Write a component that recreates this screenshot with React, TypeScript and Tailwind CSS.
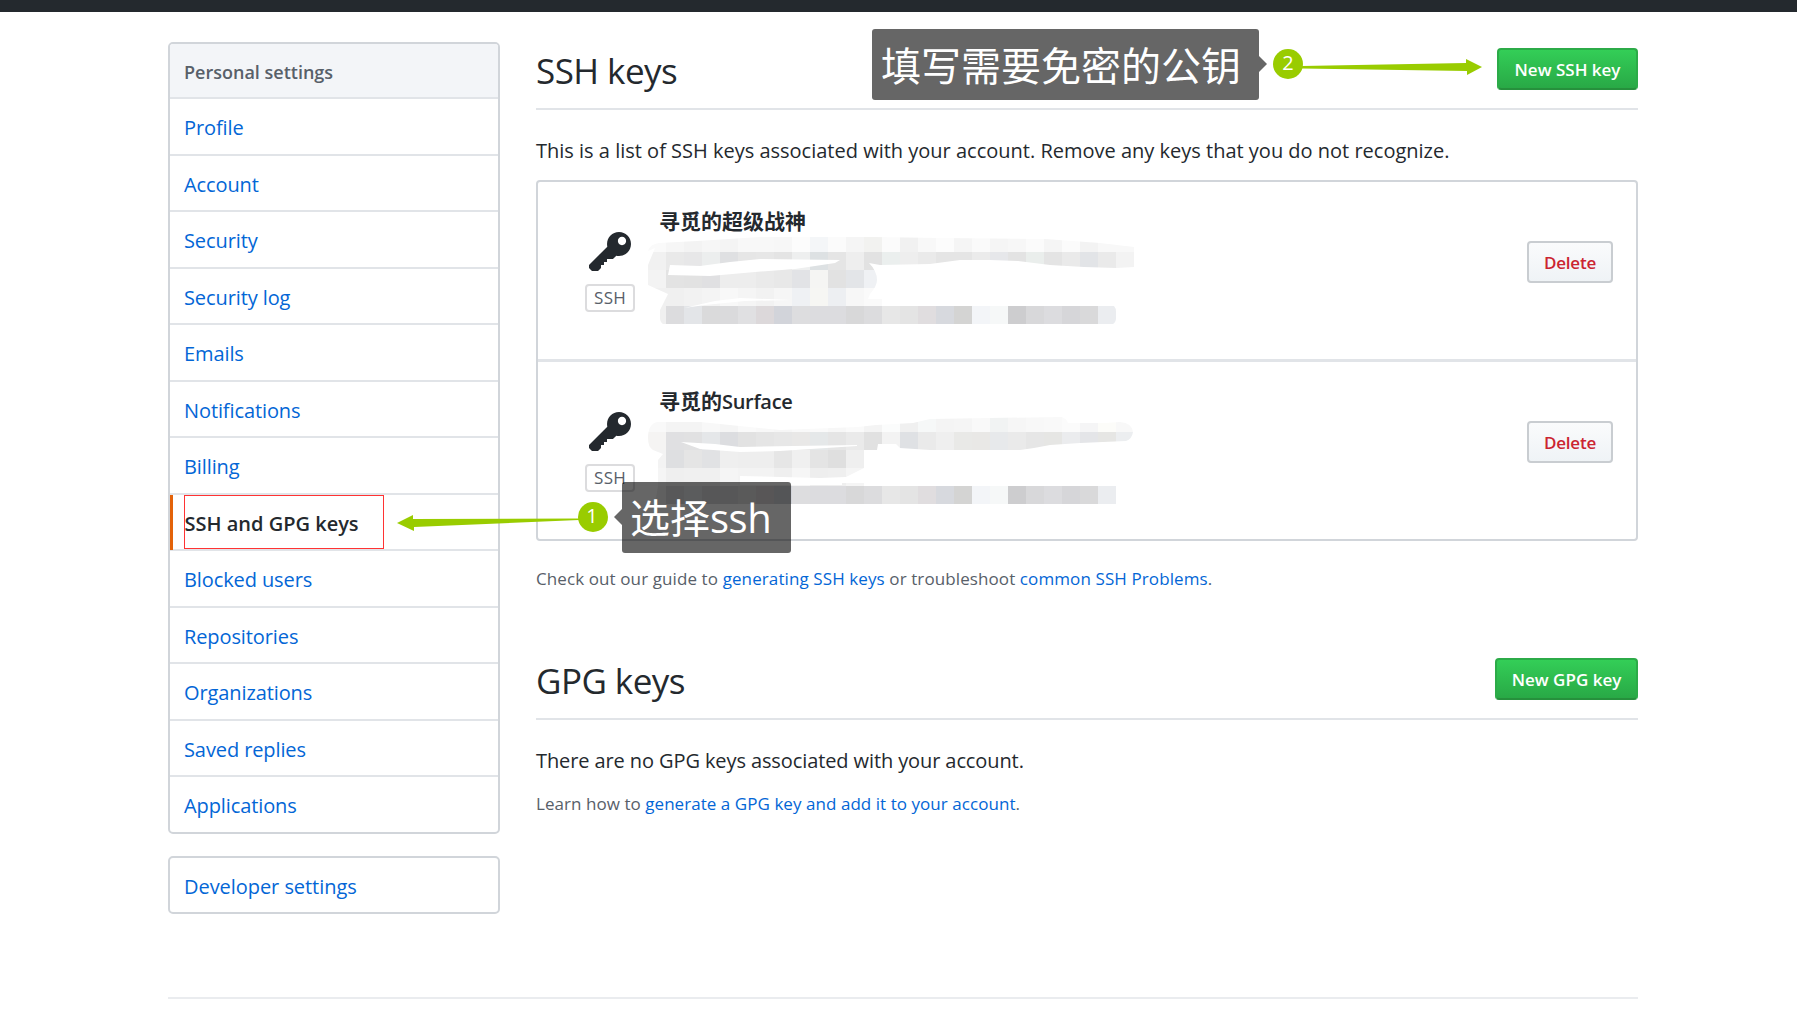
import React from 'react';

const navItems = [
  'Profile',
  'Account',
  'Security',
  'Security log',
  'Emails',
  'Notifications',
  'Billing',
  'SSH and GPG keys',
  'Blocked users',
  'Repositories',
  'Organizations',
  'Saved replies',
  'Applications',
];

// One cell of the mosaic is 18px wide, rows are 18px tall
type MosaicRow = { x: number; y: number; cells: string[] };

const lastRow = [
  '#f0f0f0', '#dcdcde', '#e3e5e8', '#dadadb', '#dadadc', '#e0e0e2', '#dcd8da', '#d2d4da', '#dddddf', '#dcdcdf', '#dcdcdf',
  '#d8d8d9', '#dcdcde', '#e7e7e7', '#e4e4e4', '#e0dddf', '#d7d9de', '#d4d4d3', '#f3f5f8', '#f6f8f8', '#cdcdcf', '#d8d8da',
  '#dcdcdf', '#d6d6d9', '#d9d9da', '#ebedf0',
];

const firstMosaic: MosaicRow[] = [
  {
    x: 3, y: 0,
    cells: [
      '#fafafa', '#f6f6f6', '#f3f3f3', '#f6f6f6', '#f4f4f4', '#f8f8f8', '#f8f8f8', '#f7f7f7', '#fcfcfc', '#f4f6f8', '#fbfbfb',
      '#f5f5f5', '#f2f2f0', '#fbfbfb', '#f1f1f1', '#f8f8f8', '#fcfcfc', '#f5f5f5', '#fafafa', '#f5f5f5', '#f7f7f7', '#fbfbfb',
      '#f5f5f5', '#fbfbfb', '#f3f3f3', '#f8f8f8', '#f8f8f8',
    ],
  },
  {
    x: 3, y: 18,
    cells: [
      '#f1f1f1', '#e9e9e9', '#e7e7e8', '#eceeee', '#dfe0e2', '#e6e6e6', '#e7e7e7', '#e4e4e4', '#eeefef', '#dde1e3', '#e5e5e5',
      '#eeeeee', '#e2e2e2', '#ebefee', '#eeeeee', '#eaeaea', '#e5e5e5', '#e5e5e5', '#ebebeb', '#e6e7ea', '#e3e3e3', '#eaeeec',
      '#e4e4e4', '#eaeaea', '#e2e4e7', '#eaeaea', '#f3f3f3',
    ],
  },
  {
    x: 3, y: 36,
    cells: ['#f3f3f3', '#e3e3e3', '#e2e2e2', '#e0e0e2', '#ededed', '#ededed', '#eaeaea', '#e8e8e8', '#e2e3e6', '#f5f5f3', '#e2e2e2', '#e3e5e8', '#eff1f4'],
  },
  {
    x: 3, y: 54,
    cells: ['#f0f0f0', '#f0f0f0', '#f2f2f2', '#f4f4f4', '#f8f8f8', '#f5f5f5', '#f2f2f2', '#f6f6f6', '#eff1f4', '#f6f6f3', '#edeff2', '#f7f7f7', '#fafafa'],
  },
  { x: 3, y: 72, cells: lastRow },
];

const secondMosaic: MosaicRow[] = [
  {
    x: 3, y: 0,
    cells: [
      '#f9f9f9', '#f4f4f4', '#f4f4f4', '#f8f8f8', '#f5f5f5', '#fafafa', '#f8f8f8', '#f6f6f6', '#f9f9f9', '#fafafa', '#f7f7f7',
      '#fafafa', '#f4f4f4', '#fbfcfc', '#f0f0f0', '#f6f8f8', '#f4f4f4', '#f5f5f5', '#f9f9f9', '#f1f3f3', '#f6f6f6', '#f8f8f8',
      '#f9f9f9', '#fbfbfb', '#f5f5f6', '#fcfcf9', '#f8f8f8',
    ],
  },
  {
    x: 3, y: 18,
    cells: [
      '#f5f4f3', '#e0e0e2', '#e1e1e2', '#e5e7e9', '#dcdde0', '#e2e2e2', '#e5e5e5', '#e7e7e7', '#e9e8e7', '#e5e8e9', '#e5e5e5',
      '#eaeaea', '#e1e1e1', '#f3f3f3', '#dfe1e4', '#eaeaea', '#efefef', '#e9e9e7', '#e9e8e6', '#e7e9eb', '#eaeaea', '#e6e6e6',
      '#e6e6e4', '#ebecee', '#e4e5e8', '#e6e6e4', '#eceef0',
    ],
  },
  {
    x: 3, y: 36,
    cells: ['#f3f3f3', '#dedfe1', '#e5e5e5', '#e1e2e4', '#efefef', '#eeeeee', '#eeeeee', '#e6e6e6', '#f0f0f0', '#e4e4e4', '#dfdfdf', '#efefef', '#f1f1f1'],
  },
  {
    x: 3, y: 54,
    cells: ['#f5f5f5', '#efefef', '#f0f0f0', '#f0f0f0', '#f5f5f5', '#f3f3f3', '#f3f3f3', '#efefef', '#f6f6f6', '#eeeeee', '#efefef', '#f5f5f5', '#f9f9f9'],
  },
  { x: 3, y: 72, cells: lastRow },
];

const firstOutline =
  'M3 17 Q5 10 14 9 L52 7 L115 3 L155 3 L228 3 L295 4 L400 5 L455 9 L489 13 V33 L471 34 L439 33 L405 31 L373 27 L345 26 L315 26 L285 30 L235 31 L224 29 Q232 37 232 46 Q232 52 225 60 L223 65 H237 V72 H469 Q471 74 471 78 V84 Q471 88 468 90 H18 Q15 88 15 84 V76 L23 60 L3 51 V31 L10 14 Z ' +
  'M25 31 L55 32 L85 28 L115 25 L195 26 L190 29 L150 35 L110 38 L65 42 L23 41 Z ' +
  'M39 74 L70 67 L95 64 L147 66 L100 67 L60 71 Z';

const secondOutline =
  'M3 24 Q3 10 12 8 L55 8 L75 10 L135 16 L213 13 L231 11 L268 9 L285 5 L345 4 L417 3 Q422 5 423 9 L460 9 L475 8 Q487 9 488 18 Q487 25 481 27 L435 29 L405 31 L389 34 L375 36 L285 36 L255 34 L251 30 L233 30 L232 36 L219 36 V54 L201 63 L175 64 L95 62 V71 L197 71 V69 H219 V72 H471 V90 H10 L13 72 V46 L18 40 L8 36 Q3 33 3 24 Z ' +
  'M36 28 L70 30 L95 33 L212 31 L212 32 L135 37 L95 38 L55 35 Z';

const Scribble = ({ id, rows, outline }: { id: string; rows: MosaicRow[]; outline: string }) => (
  <svg className="-ml-[14px] -mt-px block" width="495" height="92" viewBox="0 0 495 92" shapeRendering="crispEdges">
    <clipPath id={id}>
      <path d={outline} clipRule="evenodd" />
    </clipPath>
    <g clipPath={`url(#${id})`}>
      {rows.map((row) =>
        row.cells.map((fill, i) => (
          <rect key={`${row.y}-${i}`} x={row.x + i * 18} y={row.y} width="18" height="18" fill={fill} />
        ))
      )}
    </g>
  </svg>
);

const KeyIcon = () => (
  <svg width="42" height="48" viewBox="0 0 14 16" fill="#24292e">
    <path
      fillRule="evenodd"
      d="M12.83 2.17C12.08 1.42 11.14 1.03 10 1c-1.13.03-2.08.42-2.83 1.17S6.04 3.86 6.01 5c0 .3.03.59.09.89L0 12v1l1 1h2l1-1v-1h1v-1h1v-1h2l1.09-1.11c.3.08.59.11.91.11 1.14-.03 2.08-.42 2.83-1.17S13.97 6.14 14 5c-.03-1.14-.42-2.08-1.17-2.83zM11 5.38c-.77 0-1.38-.61-1.38-1.38 0-.77.61-1.38 1.38-1.38.77 0 1.38.61 1.38 1.38 0 .77-.61 1.38-1.38 1.38z"
    />
  </svg>
);

const GreenButton = ({ children, className }: { children: React.ReactNode; className: string }) => (
  <button
    className={`mt-1.5 h-[42px] rounded-[4px] border-2 border-[#2cab48] border-b-[#26903c] bg-linear-to-b from-[#34d058] to-[#28a745] bg-origin-border text-[17px] font-semibold leading-[40px] text-white ${className}`}
  >
    {children}
  </button>
);

const SectionHead = ({ title, children }: { title: string; children: React.ReactNode }) => (
  <div className="flex h-[68px] items-start justify-between border-b-2 border-[#e1e4e8]">
    <h2 className="text-[35px] leading-[58px] tracking-[-0.55px]">{title}</h2>
    {children}
  </div>
);

const KeyRow = ({ title, children }: { title: React.ReactNode; children: React.ReactNode }) => (
  <li className="box-content flex h-[177px] items-start pl-[47px] pr-[23px]">
    <div className="flex w-[50px] flex-col items-center pt-[47px]">
      <KeyIcon />
      <span className="mt-[7px] h-7 w-[50px] rounded-[4px] border-2 border-[#dcdcde] text-center text-[17px] leading-[24px] tracking-[0.2px] text-[#586069]">
        SSH
      </span>
    </div>
    <div className="ml-6 flex-1 pt-[25px]">
      <strong className="block h-7 text-[21px] font-bold leading-7">{title}</strong>
      {children}
    </div>
    <button className="mt-[59px] h-[42px] w-[86px] rounded-[4px] border-2 border-[#c9cdd1] bg-linear-to-b from-[#fafbfc] to-[#eff3f6] text-[17px] font-semibold leading-[40px] tracking-[-0.2px] text-[#cb2431]">
      Delete
    </button>
  </li>
);

const Link = ({ children }: { children: React.ReactNode }) => (
  <a href="#" className="text-[#0366d6]">
    {children}
  </a>
);

const App = () => {
  return (
    <div className="relative h-[1016px] w-[1797px] overflow-hidden bg-white font-['Open_Sans','Noto_Sans_CJK_SC',sans-serif] text-[20px] text-[#24292e]">
      <div className="h-3 bg-[#24292e]" />

      <div className="ml-[168px] w-[1470px] pt-[30px]">
        <div className="flex h-[955px] items-start gap-9">
          <aside className="w-[332px]">
            <nav className="flex h-[792px] flex-col overflow-hidden rounded-[5px] border-2 border-[#d1d5da]">
              <h3 className="h-[55px] border-b-2 border-[#e1e4e8] bg-[#f3f5f8] pl-[14px] text-[18px] font-semibold leading-[56px] text-[#586069]">
                Personal settings
              </h3>
              {navItems.map((item) =>
                item === 'SSH and GPG keys' ? (
                  <a
                    key={item}
                    href="#"
                    className="relative h-[56.54px] border-b-2 border-[#e1e4e8] pl-[14.5px] font-semibold leading-[58px] before:absolute before:left-0 before:top-0 before:h-[55px] before:w-[3px] before:bg-[#e36209]"
                  >
                    {item}
                  </a>
                ) : (
                  <a
                    key={item}
                    href="#"
                    className="h-[56.54px] border-b-2 border-[#e1e4e8] pl-[14px] leading-[58px] tracking-[-0.1px] text-[#0366d6] last:border-b-0"
                  >
                    {item}
                  </a>
                )
              )}
            </nav>
            <nav className="mt-[22px] h-[58px] rounded-[5px] border-2 border-[#d1d5da] pl-[14px] leading-[58px] tracking-[-0.05px]">
              <Link>Developer settings</Link>
            </nav>
          </aside>

          <main className="w-[1102px]">
            <SectionHead title="SSH keys">
              <GreenButton className="w-[141px]">New SSH key</GreenButton>
            </SectionHead>
            <p className="mt-[25px] leading-8">
              This is a list of SSH keys associated with your account. Remove any keys that you do not recognize.
            </p>
            <ul className="mt-[13px] divide-y-3 divide-[#e1e4e8] rounded-[4px] border-2 border-[#d1d5da]">
              <KeyRow title="寻觅的超级战神">
                <Scribble id="mosaic-first" rows={firstMosaic} outline={firstOutline} />
              </KeyRow>
              <KeyRow
                title={
                  <>
                    寻觅的<span className="text-[20px] font-semibold tracking-[-0.3px]">Surface</span>
                  </>
                }
              >
                <Scribble id="mosaic-second" rows={secondMosaic} outline={secondOutline} />
              </KeyRow>
            </ul>
            <p className="mt-6 text-[17px] leading-[27px] tracking-[0.1px] text-[#586069]">
              Check out our guide to <Link>generating SSH keys</Link> or troubleshoot <Link>common SSH Problems</Link>.
            </p>

            <div className="mt-[60px]">
              <SectionHead title="GPG keys">
                <GreenButton className="w-[143px]">New GPG key</GreenButton>
              </SectionHead>
            </div>
            <p className="mt-[25px] leading-8 tracking-[-0.1px]">There are no GPG keys associated with your account.</p>
            <p className="mt-[13px] text-[17px] leading-[27px] tracking-[0.05px] text-[#586069]">
              Learn how to <Link>generate a GPG key and add it to your account</Link>.
            </p>
          </main>
        </div>
        <div className="border-t-2 border-[#eaecef]" />
      </div>

      {/* step 1 */}
      <div className="absolute left-[184px] top-[495px] h-[54px] w-[200px] border border-[#ff3333]" />
      <svg className="absolute left-[396px] top-[500px]" width="226" height="36" viewBox="0 0 226 36">
        <path d="M1 23 L17 15 V19 L183 18.5 V20 L18 27 V31 Z" fill="#99cc00" />
        <circle cx="197" cy="17" r="15" fill="#99cc00" />
        <path d="M218 17 L226 9 V25 Z" fill="#000" fillOpacity="0.6" />
      </svg>
      <span className="absolute left-[577px] top-[501px] w-[30px] text-center text-[20px] leading-[30px] text-white">1</span>
      <div className="absolute left-[622px] top-[482px] h-[71px] w-[169px] rounded-[3px] bg-black/60 pl-2 text-[40px] leading-[71px] text-white">
        选择<span className="tracking-[-0.5px]">ssh</span>
      </div>

      {/* step 2 */}
      <div className="absolute left-[872px] top-[29px] h-[71px] w-[387px] rounded-[3px] bg-black/60 pl-[9px] text-[40px] leading-[73px] text-white">
        填写需要免密的公钥
      </div>
      <svg className="absolute left-[1259px] top-[46px]" width="226" height="36" viewBox="0 0 226 36">
        <path d="M8 18 L0 10 V26 Z" fill="#000" fillOpacity="0.6" />
        <circle cx="29" cy="18" r="15" fill="#99cc00" />
        <path d="M43 20 L207 17 V13 L223 21 L208 29 V25 L43 22.5 Z" fill="#99cc00" />
      </svg>
      <span className="absolute left-[1273px] top-[48px] w-[30px] text-center text-[20px] leading-[30px] text-white">2</span>
    </div>
  );
};

export default App;
